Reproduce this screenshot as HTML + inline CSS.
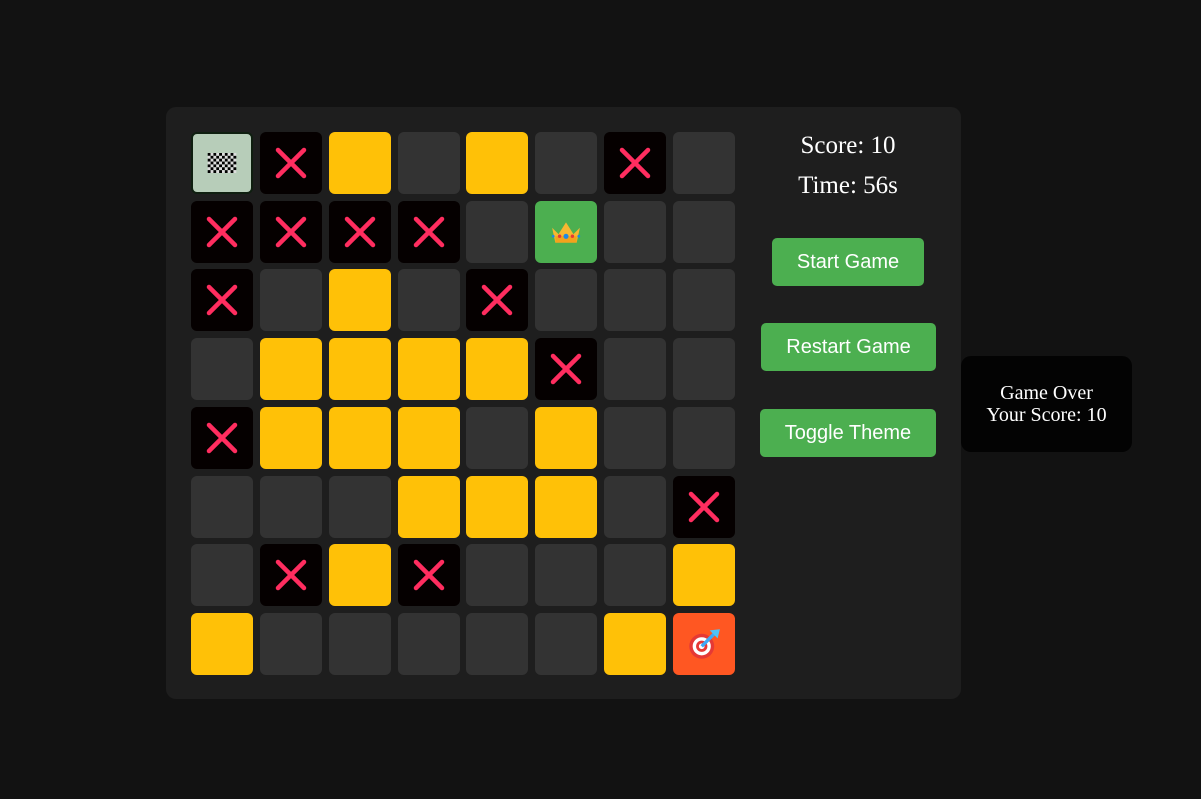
<!DOCTYPE html>
<html><head><meta charset="utf-8"><style>
html,body{margin:0;padding:0;background:#121212;width:1201px;height:799px;overflow:hidden}
.panel{position:absolute;left:166px;top:107px;width:795px;height:592px;background:#1e1e1e;border-radius:10px}
.grid{position:absolute;left:191px;top:132px;display:grid;grid-template-columns:repeat(8,62px);grid-template-rows:repeat(8,62px);column-gap:6.86px;row-gap:6.72px}
.c{border-radius:6px;background:#333;position:relative;display:flex;align-items:center;justify-content:center;box-sizing:border-box}
.c svg{flex:none}
.y{background:#ffc107}.x{background:#050000}.s{background:#b7cdb9;border:2px solid #0f1f10}.g{background:#4caf50}.t{background:#ff5722}
.info{position:absolute;left:760px;width:176px;text-align:center;color:#fff;font:25px "Liberation Serif",serif}
.btn{position:absolute;background:#4caf50;color:#fff;border-radius:5px;font:20px "Liberation Sans",sans-serif;display:flex;align-items:center;justify-content:center}
.over{position:absolute;left:961px;top:356px;width:171px;height:96px;background:#030303;border-radius:10px;color:#fff;font:20px "Liberation Serif",serif;text-align:center;display:flex;align-items:center;justify-content:center;line-height:22px}
</style></head><body>
<div class="panel"></div>
<div class="grid" id="g"></div>
<div class="info" style="top:132px">Score: 10</div>
<div class="info" style="top:172px">Time: 56s</div>
<div class="btn" style="left:772px;top:238px;width:152px;height:48px">Start Game</div>
<div class="btn" style="left:761px;top:323px;width:175px;height:48px">Restart Game</div>
<div class="btn" style="left:760px;top:409px;width:176px;height:48px">Toggle Theme</div>
<div class="over"><div>Game Over<br>Your Score: 10</div></div>
<script>
var L=["SXYDYDXD","XXXXDCDD","XDYDXDDD","DYYYYXDD","XYYYDYDD","DDDYYYDX","DXYXDDDY","YDDDDDYT"];
var X='<svg width="32" height="32" viewBox="0 0 32 32"><path d="M3 3L29 29M29 3L3 29" stroke="#ff2d5f" stroke-width="4.5" stroke-linecap="round"/></svg>';
var flag='<svg width="30" height="20" viewBox="0 0 10 7">';
for(var r=0;r<7;r++)for(var c=0;c<10;c++){flag+='<rect x="'+c+'" y="'+r+'" width="1" height="1" fill="'+((r+c)%2?'#ddd':'#000')+'"/>';}
flag+='</svg>';
var crown='<svg width="32" height="26" viewBox="0 0 30 24"><path d="M2 8L8 14L15 3L22 14L28 8L25 22H5Z" fill="#f7b731"/><rect x="5" y="16" width="20" height="6" fill="#f3a21c"/><circle cx="9" cy="16" r="1.6" fill="#e53935"/><circle cx="21" cy="16" r="1.6" fill="#e53935"/><circle cx="15" cy="16" r="2.4" fill="#1e88e5"/><circle cx="3" cy="16" r="1.3" fill="#1e88e5"/><circle cx="27" cy="16" r="1.3" fill="#1e88e5"/></svg>';
var tgt='<svg width="34" height="34" viewBox="0 0 30 30"><circle cx="13" cy="17" r="11" fill="#e53935"/><circle cx="13" cy="17" r="8" fill="#fff"/><circle cx="13" cy="17" r="5" fill="#e53935"/><circle cx="13" cy="17" r="2.5" fill="#fff"/><path d="M13 17L25 5" stroke="#3fa9f5" stroke-width="3"/><path d="M20 3L27 10L29 2Z" fill="#4fc3f7"/></svg>';
var h='';
L.forEach(function(row){for(var i=0;i<8;i++){var ch=row[i];
if(ch=='D')h+='<div class="c"></div>';else if(ch=='Y')h+='<div class="c y"></div>';else if(ch=='X')h+='<div class="c x">'+X+'</div>';
else if(ch=='S')h+='<div class="c s">'+flag+'</div>';else if(ch=='C')h+='<div class="c g">'+crown+'</div>';else h+='<div class="c t">'+tgt+'</div>';}});
document.getElementById('g').innerHTML=h;
</script>
</body></html>
